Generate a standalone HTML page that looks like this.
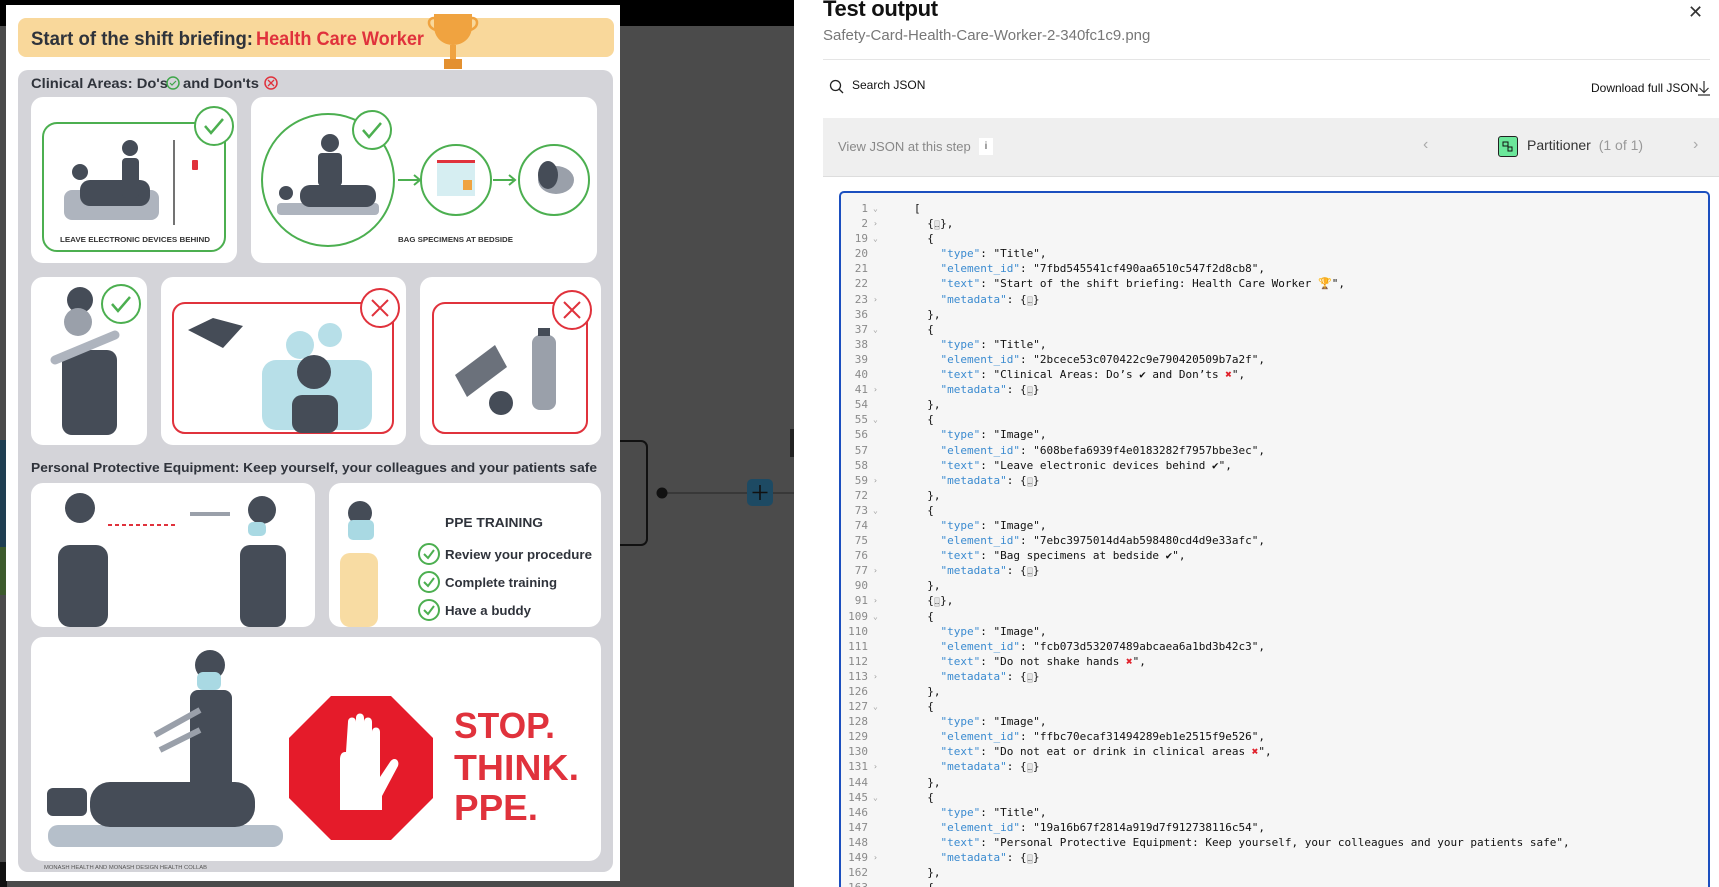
<!DOCTYPE html>
<html><head><meta charset="utf-8"><style>
html,body{margin:0;width:1719px;height:887px;overflow:hidden}
body{background:#fff;font-family:"Liberation Sans",sans-serif;position:relative}
.abs{position:absolute}
#code{position:absolute;left:839px;top:191px;width:871px;height:696px;border:2px solid #1b4fbf;border-bottom:none;border-radius:5px 5px 0 0;background:#f6f6f6;box-sizing:border-box;overflow:hidden}
#code pre{margin:0;position:absolute;left:0;top:8px;font-family:"DejaVu Sans Mono","Liberation Mono",monospace;font-size:11px;line-height:15.1px;color:#111}
.ln{color:#8a8a8a;display:inline-block;width:27px;text-align:right;height:15px;vertical-align:top}
.ar{color:#999;display:inline-block;width:46px;font-size:8px;padding-left:5px;box-sizing:border-box;height:15px;vertical-align:top;line-height:15px}
.k{color:#3b8bd0}
.b{background:#e4e4e4;border:1px solid #ccc;border-radius:2px;font-size:7px;line-height:1;color:#666}
.x{color:#e0202a;font-weight:bold}
</style></head><body>
<svg class="abs" style="left:0;top:0" width="794" height="887" viewBox="0 0 794 887">
<rect x="0" y="0" width="794" height="887" fill="#4b4b4b"/>
<rect x="0" y="0" width="794" height="26" fill="#000"/>
<rect x="0" y="440" width="7" height="107" fill="#1f3e52"/>
<rect x="0" y="547" width="7" height="48" fill="#3c5a2c"/>
<rect x="0" y="862" width="7" height="25" fill="#111"/>
<rect x="600" y="441" width="47" height="104" rx="6" fill="none" stroke="#111" stroke-width="2"/>
<line x1="662" y1="493" x2="794" y2="493" stroke="#333" stroke-width="1.5"/>
<circle cx="662" cy="493" r="5.5" fill="#111"/>
<rect x="747" y="479" width="26" height="27" rx="5" fill="#1d4a63"/>
<path d="M760 485v15M752.5 492.5h15" stroke="#111" stroke-width="1.6"/>
<rect x="790" y="429" width="8" height="28" fill="#222"/>
<rect x="6" y="5" width="614" height="876" fill="#fff"/>
<rect x="18" y="18" width="596" height="39" rx="8" fill="#f9d89b"/>
<text x="31" y="45" font-family="Liberation Sans" font-weight="bold" font-size="19" fill="#2f333b" textLength="222" lengthAdjust="spacingAndGlyphs">Start of the shift briefing:</text>
<text x="256" y="45" font-family="Liberation Sans" font-weight="bold" font-size="19" fill="#e0323c" textLength="168" lengthAdjust="spacingAndGlyphs">Health Care Worker</text>
<path d="M434 14h38v12c0 12-9 19-19 19s-19-7-19-19z" fill="#f0a340"/>
<path d="M434 18c-7 0-7 10 2 12M472 18c7 0 7 10-2 12" fill="none" stroke="#f0a340" stroke-width="2.5"/>
<rect x="450" y="45" width="6" height="14" fill="#f0a340"/>
<rect x="444" y="59" width="18" height="10" fill="#e39030"/>
<rect x="18" y="70" width="595" height="802" rx="10" fill="#d4d4d9"/>
<text x="31" y="88" font-family="Liberation Sans" font-weight="bold" font-size="14" fill="#2f333b" textLength="137" lengthAdjust="spacingAndGlyphs">Clinical Areas: Do's</text>
<circle cx="173" cy="83" r="6" fill="none" stroke="#3fa64a" stroke-width="1.5"/>
<path d="M170 83l2 2 4-4" fill="none" stroke="#3fa64a" stroke-width="1.2"/>
<text x="183" y="88" font-family="Liberation Sans" font-weight="bold" font-size="14" fill="#2f333b" textLength="76" lengthAdjust="spacingAndGlyphs">and Don'ts</text>
<circle cx="271" cy="83" r="6" fill="none" stroke="#e0323c" stroke-width="1.5"/>
<path d="M268 80l6 6M274 80l-6 6" stroke="#e0323c" stroke-width="1.3"/>
<rect x="31" y="97" width="206" height="166" rx="12" fill="#fff"/>
<rect x="251" y="97" width="346" height="166" rx="12" fill="#fff"/>
<rect x="43" y="123" width="182" height="128" rx="14" fill="none" stroke="#4caf50" stroke-width="2"/>
<circle cx="214" cy="126" r="19" fill="#fff" stroke="#4caf50" stroke-width="2"/>
<path d="M205 126l6 7 12-14" fill="none" stroke="#4caf50" stroke-width="2.5"/>
<rect x="64" y="190" width="95" height="30" rx="8" fill="#aeb4be"/>
<rect x="80" y="180" width="70" height="26" rx="10" fill="#454c57"/>
<circle cx="80" cy="172" r="8" fill="#454c57"/>
<circle cx="130" cy="148" r="8" fill="#454c57"/>
<rect x="122" y="158" width="17" height="40" rx="4" fill="#454c57"/>
<line x1="174" y1="140" x2="174" y2="225" stroke="#444" stroke-width="1.5"/>
<rect x="192" y="160" width="6" height="10" rx="1" fill="#e0323c"/>
<text x="60" y="242" font-family="Liberation Sans" font-weight="bold" font-size="7" fill="#333" textLength="150" lengthAdjust="spacingAndGlyphs">LEAVE ELECTRONIC DEVICES BEHIND</text>
<circle cx="328" cy="180" r="66" fill="none" stroke="#4caf50" stroke-width="2"/>
<circle cx="372" cy="130" r="19" fill="#fff" stroke="#4caf50" stroke-width="2"/>
<path d="M363 130l6 7 12-14" fill="none" stroke="#4caf50" stroke-width="2.5"/>
<rect x="277" y="203" width="102" height="12" rx="4" fill="#aeb4be"/>
<rect x="300" y="185" width="76" height="22" rx="10" fill="#454c57"/>
<circle cx="286" cy="193" r="7" fill="#454c57"/>
<circle cx="330" cy="143" r="9" fill="#454c57"/>
<rect x="318" y="153" width="24" height="33" rx="4" fill="#454c57"/>
<path d="M398 180h22M414 175l6 5-6 5" stroke="#4caf50" stroke-width="2" fill="none"/>
<circle cx="456" cy="180" r="35" fill="none" stroke="#4caf50" stroke-width="2"/>
<rect x="437" y="160" width="38" height="36" fill="#d6eef2"/>
<rect x="437" y="160" width="38" height="3" fill="#e0323c"/>
<rect x="463" y="180" width="9" height="10" fill="#f0a340"/>
<path d="M493 180h22M509 175l6 5-6 5" stroke="#4caf50" stroke-width="2" fill="none"/>
<circle cx="554" cy="180" r="35" fill="none" stroke="#4caf50" stroke-width="2"/>
<ellipse cx="556" cy="180" rx="18" ry="14" fill="#9aa0aa"/>
<ellipse cx="548" cy="175" rx="10" ry="14" fill="#454c57"/>
<text x="398" y="242" font-family="Liberation Sans" font-weight="bold" font-size="7" fill="#333" textLength="115" lengthAdjust="spacingAndGlyphs">BAG SPECIMENS AT BEDSIDE</text>
<rect x="31" y="277" width="116" height="168" rx="12" fill="#fff"/>
<rect x="161" y="277" width="245" height="168" rx="12" fill="#fff"/>
<rect x="420" y="277" width="181" height="168" rx="12" fill="#fff"/>
<circle cx="80" cy="300" r="13" fill="#454c57"/>
<circle cx="78" cy="322" r="14" fill="#9aa0aa"/>
<rect x="62" y="350" width="55" height="85" rx="10" fill="#454c57"/>
<path d="M55 360l60-25" stroke="#aeb4be" stroke-width="9" stroke-linecap="round"/>
<circle cx="121" cy="304" r="19" fill="#fff" stroke="#4caf50" stroke-width="2"/>
<path d="M112 304l6 7 12-14" fill="none" stroke="#4caf50" stroke-width="2.5"/>
<rect x="173" y="303" width="220" height="130" rx="12" fill="none" stroke="#e0323c" stroke-width="2"/>
<circle cx="380" cy="308" r="19" fill="#fff" stroke="#e0323c" stroke-width="2"/>
<path d="M372 300l16 16M388 300l-16 16" stroke="#e0323c" stroke-width="2"/>
<path d="M188 330l25-12 30 8-20 22z" fill="#454c57"/>
<circle cx="300" cy="345" r="14" fill="#b7dfe8"/><circle cx="330" cy="335" r="12" fill="#b7dfe8"/>
<rect x="262" y="360" width="110" height="70" rx="14" fill="#b7dfe8"/>
<circle cx="314" cy="372" r="17" fill="#454c57"/>
<rect x="292" y="395" width="46" height="38" rx="10" fill="#454c57"/>
<rect x="433" y="303" width="154" height="130" rx="12" fill="none" stroke="#e0323c" stroke-width="2"/>
<circle cx="572" cy="310" r="19" fill="#fff" stroke="#e0323c" stroke-width="2"/>
<path d="M564 302l16 16M580 302l-16 16" stroke="#e0323c" stroke-width="2"/>
<path d="M455 375l40-30 12 22-40 30z" fill="#6b717b"/>
<circle cx="501" cy="403" r="12" fill="#454c57"/>
<rect x="532" y="335" width="24" height="75" rx="8" fill="#9aa0aa"/>
<rect x="538" y="328" width="12" height="8" fill="#454c57"/>
<text x="31" y="472" font-family="Liberation Sans" font-weight="bold" font-size="13" fill="#2f333b" textLength="566" lengthAdjust="spacingAndGlyphs">Personal Protective Equipment: Keep yourself, your colleagues and your patients safe</text>
<rect x="31" y="483" width="284" height="144" rx="12" fill="#fff"/>
<rect x="329" y="483" width="272" height="144" rx="12" fill="#fff"/>
<circle cx="80" cy="508" r="15" fill="#454c57"/>
<rect x="58" y="545" width="50" height="82" rx="12" fill="#454c57"/>
<path d="M108 525h68" stroke="#e0323c" stroke-width="2" stroke-dasharray="4 3"/>
<circle cx="262" cy="510" r="14" fill="#454c57"/>
<rect x="240" y="545" width="46" height="82" rx="10" fill="#454c57"/>
<path d="M190 514h40" stroke="#9aa0aa" stroke-width="4"/>
<rect x="248" y="522" width="18" height="14" rx="5" fill="#a9d9e3"/>
<circle cx="360" cy="513" r="12" fill="#454c57"/>
<rect x="340" y="553" width="38" height="74" rx="10" fill="#f8dca3"/>
<rect x="348" y="520" width="26" height="20" rx="5" fill="#a9d9e3"/>
<text x="445" y="527" font-family="Liberation Sans" font-weight="bold" font-size="13" fill="#2f333b" textLength="98" lengthAdjust="spacingAndGlyphs">PPE TRAINING</text>
<g font-family="Liberation Sans" font-weight="bold" font-size="13" fill="#2f333b">
<circle cx="429" cy="554" r="10" fill="none" stroke="#4caf50" stroke-width="2"/><path d="M424 554l4 4 6-8" fill="none" stroke="#4caf50" stroke-width="2"/>
<text x="445" y="559" textLength="147" lengthAdjust="spacingAndGlyphs">Review your procedure</text>
<circle cx="429" cy="582" r="10" fill="none" stroke="#4caf50" stroke-width="2"/><path d="M424 582l4 4 6-8" fill="none" stroke="#4caf50" stroke-width="2"/>
<text x="445" y="587" textLength="112" lengthAdjust="spacingAndGlyphs">Complete training</text>
<circle cx="429" cy="610" r="10" fill="none" stroke="#4caf50" stroke-width="2"/><path d="M424 610l4 4 6-8" fill="none" stroke="#4caf50" stroke-width="2"/>
<text x="445" y="615" textLength="86" lengthAdjust="spacingAndGlyphs">Have a buddy</text>
</g>
<rect x="31" y="637" width="570" height="224" rx="12" fill="#fff"/>
<circle cx="210" cy="665" r="15" fill="#454c57"/>
<rect x="197" y="672" width="24" height="18" rx="6" fill="#a9d9e3"/>
<rect x="190" y="690" width="42" height="100" rx="8" fill="#454c57"/>
<rect x="48" y="825" width="235" height="22" rx="10" fill="#b5bfca"/>
<rect x="90" y="782" width="165" height="45" rx="20" fill="#454c57"/>
<rect x="47" y="788" width="40" height="28" rx="6" fill="#454c57"/>
<path d="M155 735l45-25M160 750l40-20" stroke="#9aa0aa" stroke-width="6"/>
<polygon points="331,696 391,696 433,738 433,798 391,840 331,840 289,798 289,738" fill="#e51b2a"/>
<path d="M340 810v-50c0-8 4-8 6-8l2-30c0-6 8-6 8 0v-4c0-6 8-6 8 0v4c0-6 8-6 8 0v10c0-6 8-6 8 0v45l10-15c4-6 10-2 8 4l-16 30v14z" fill="#fff"/>
<g font-family="Liberation Sans" font-weight="bold" fill="#e0323c" font-size="36">
<text x="454" y="738" textLength="101" lengthAdjust="spacingAndGlyphs">STOP.</text>
<text x="454" y="780" textLength="125" lengthAdjust="spacingAndGlyphs">THINK.</text>
<text x="454" y="820" textLength="84" lengthAdjust="spacingAndGlyphs">PPE.</text>
</g>
<text x="44" y="869" font-family="Liberation Sans" font-size="5" fill="#555" textLength="163" lengthAdjust="spacingAndGlyphs">MONASH HEALTH AND MONASH DESIGN HEALTH COLLAB</text>
</svg>
<div class="abs" style="left:823px;top:-4px;font-size:22px;font-weight:bold;color:#111;letter-spacing:-0.3px">Test output</div>
<div class="abs" style="left:823px;top:27px;font-size:15px;color:#777">Safety-Card-Health-Care-Worker-2-340fc1c9.png</div>
<div class="abs" style="left:1688px;top:2px;font-size:18px;color:#333">✕</div>
<div class="abs" style="left:823px;top:59px;width:887px;height:1px;background:#e5e5e5"></div>
<svg class="abs" style="left:829px;top:79px" width="16" height="16"><circle cx="6.5" cy="6.5" r="5" fill="none" stroke="#222" stroke-width="1.3"/><path d="M10 10l4 4" stroke="#222" stroke-width="1.3"/></svg>
<div class="abs" style="left:852px;top:78px;font-size:12px;color:#111">Search JSON</div>
<div class="abs" style="left:1591px;top:81px;font-size:12px;color:#111">Download full JSON</div>
<svg class="abs" style="left:1697px;top:80px" width="14" height="16"><path d="M7 1v11M2.5 8l4.5 4.5L11.5 8M1 15h12" fill="none" stroke="#333" stroke-width="1.2"/></svg>
<div class="abs" style="left:823px;top:118px;width:896px;height:58px;background:#efefef;border-bottom:1px solid #ddd"></div>
<div class="abs" style="left:838px;top:139px;font-size:13px;color:#888">View JSON at this step</div>
<div class="abs" style="left:979px;top:138px;width:14px;height:17px;background:#fff;font-size:10px;text-align:center;line-height:17px;color:#333">i</div>
<div class="abs" style="left:1423px;top:136px;font-size:16px;color:#aaa">‹</div>
<div class="abs" style="left:1498px;top:136px;width:20px;height:21px;background:#6be79a;border:1px solid #222;border-radius:3px;box-sizing:border-box"><svg width="18" height="19"><rect x="4" y="5" width="5" height="4" fill="none" stroke="#111"/><rect x="9" y="10" width="4" height="4" fill="none" stroke="#111"/></svg></div>
<div class="abs" style="left:1527px;top:137px;font-size:14px;color:#333">Partitioner <span style="color:#999;margin-left:4px">(1 of 1)</span></div>
<div class="abs" style="left:1693px;top:136px;font-size:16px;color:#aaa">›</div>
<div id="code"><pre><span class="ln">1</span><span class="ar">⌄</span>[
<span class="ln">2</span><span class="ar">›</span>  {<span class="b">…</span>},
<span class="ln">19</span><span class="ar">⌄</span>  {
<span class="ln">20</span><span class="ar"></span>    <span class="k">"type"</span>: "Title",
<span class="ln">21</span><span class="ar"></span>    <span class="k">"element_id"</span>: "7fbd545541cf490aa6510c547f2d8cb8",
<span class="ln">22</span><span class="ar"></span>    <span class="k">"text"</span>: "Start of the shift briefing: Health Care Worker 🏆",
<span class="ln">23</span><span class="ar">›</span>    <span class="k">"metadata"</span>: {<span class="b">…</span>}
<span class="ln">36</span><span class="ar"></span>  },
<span class="ln">37</span><span class="ar">⌄</span>  {
<span class="ln">38</span><span class="ar"></span>    <span class="k">"type"</span>: "Title",
<span class="ln">39</span><span class="ar"></span>    <span class="k">"element_id"</span>: "2bcece53c070422c9e790420509b7a2f",
<span class="ln">40</span><span class="ar"></span>    <span class="k">"text"</span>: "Clinical Areas: Do’s ✔ and Don’ts <span class="x">✖</span>",
<span class="ln">41</span><span class="ar">›</span>    <span class="k">"metadata"</span>: {<span class="b">…</span>}
<span class="ln">54</span><span class="ar"></span>  },
<span class="ln">55</span><span class="ar">⌄</span>  {
<span class="ln">56</span><span class="ar"></span>    <span class="k">"type"</span>: "Image",
<span class="ln">57</span><span class="ar"></span>    <span class="k">"element_id"</span>: "608befa6939f4e0183282f7957bbe3ec",
<span class="ln">58</span><span class="ar"></span>    <span class="k">"text"</span>: "Leave electronic devices behind ✔",
<span class="ln">59</span><span class="ar">›</span>    <span class="k">"metadata"</span>: {<span class="b">…</span>}
<span class="ln">72</span><span class="ar"></span>  },
<span class="ln">73</span><span class="ar">⌄</span>  {
<span class="ln">74</span><span class="ar"></span>    <span class="k">"type"</span>: "Image",
<span class="ln">75</span><span class="ar"></span>    <span class="k">"element_id"</span>: "7ebc3975014d4ab598480cd4d9e33afc",
<span class="ln">76</span><span class="ar"></span>    <span class="k">"text"</span>: "Bag specimens at bedside ✔",
<span class="ln">77</span><span class="ar">›</span>    <span class="k">"metadata"</span>: {<span class="b">…</span>}
<span class="ln">90</span><span class="ar"></span>  },
<span class="ln">91</span><span class="ar">›</span>  {<span class="b">…</span>},
<span class="ln">109</span><span class="ar">⌄</span>  {
<span class="ln">110</span><span class="ar"></span>    <span class="k">"type"</span>: "Image",
<span class="ln">111</span><span class="ar"></span>    <span class="k">"element_id"</span>: "fcb073d53207489abcaea6a1bd3b42c3",
<span class="ln">112</span><span class="ar"></span>    <span class="k">"text"</span>: "Do not shake hands <span class="x">✖</span>",
<span class="ln">113</span><span class="ar">›</span>    <span class="k">"metadata"</span>: {<span class="b">…</span>}
<span class="ln">126</span><span class="ar"></span>  },
<span class="ln">127</span><span class="ar">⌄</span>  {
<span class="ln">128</span><span class="ar"></span>    <span class="k">"type"</span>: "Image",
<span class="ln">129</span><span class="ar"></span>    <span class="k">"element_id"</span>: "ffbc70ecaf31494289eb1e2515f9e526",
<span class="ln">130</span><span class="ar"></span>    <span class="k">"text"</span>: "Do not eat or drink in clinical areas <span class="x">✖</span>",
<span class="ln">131</span><span class="ar">›</span>    <span class="k">"metadata"</span>: {<span class="b">…</span>}
<span class="ln">144</span><span class="ar"></span>  },
<span class="ln">145</span><span class="ar">⌄</span>  {
<span class="ln">146</span><span class="ar"></span>    <span class="k">"type"</span>: "Title",
<span class="ln">147</span><span class="ar"></span>    <span class="k">"element_id"</span>: "19a16b67f2814a919d7f912738116c54",
<span class="ln">148</span><span class="ar"></span>    <span class="k">"text"</span>: "Personal Protective Equipment: Keep yourself, your colleagues and your patients safe",
<span class="ln">149</span><span class="ar">›</span>    <span class="k">"metadata"</span>: {<span class="b">…</span>}
<span class="ln">162</span><span class="ar"></span>  },
<span class="ln">163</span><span class="ar">⌄</span>  {
</pre></div>
</body></html>
